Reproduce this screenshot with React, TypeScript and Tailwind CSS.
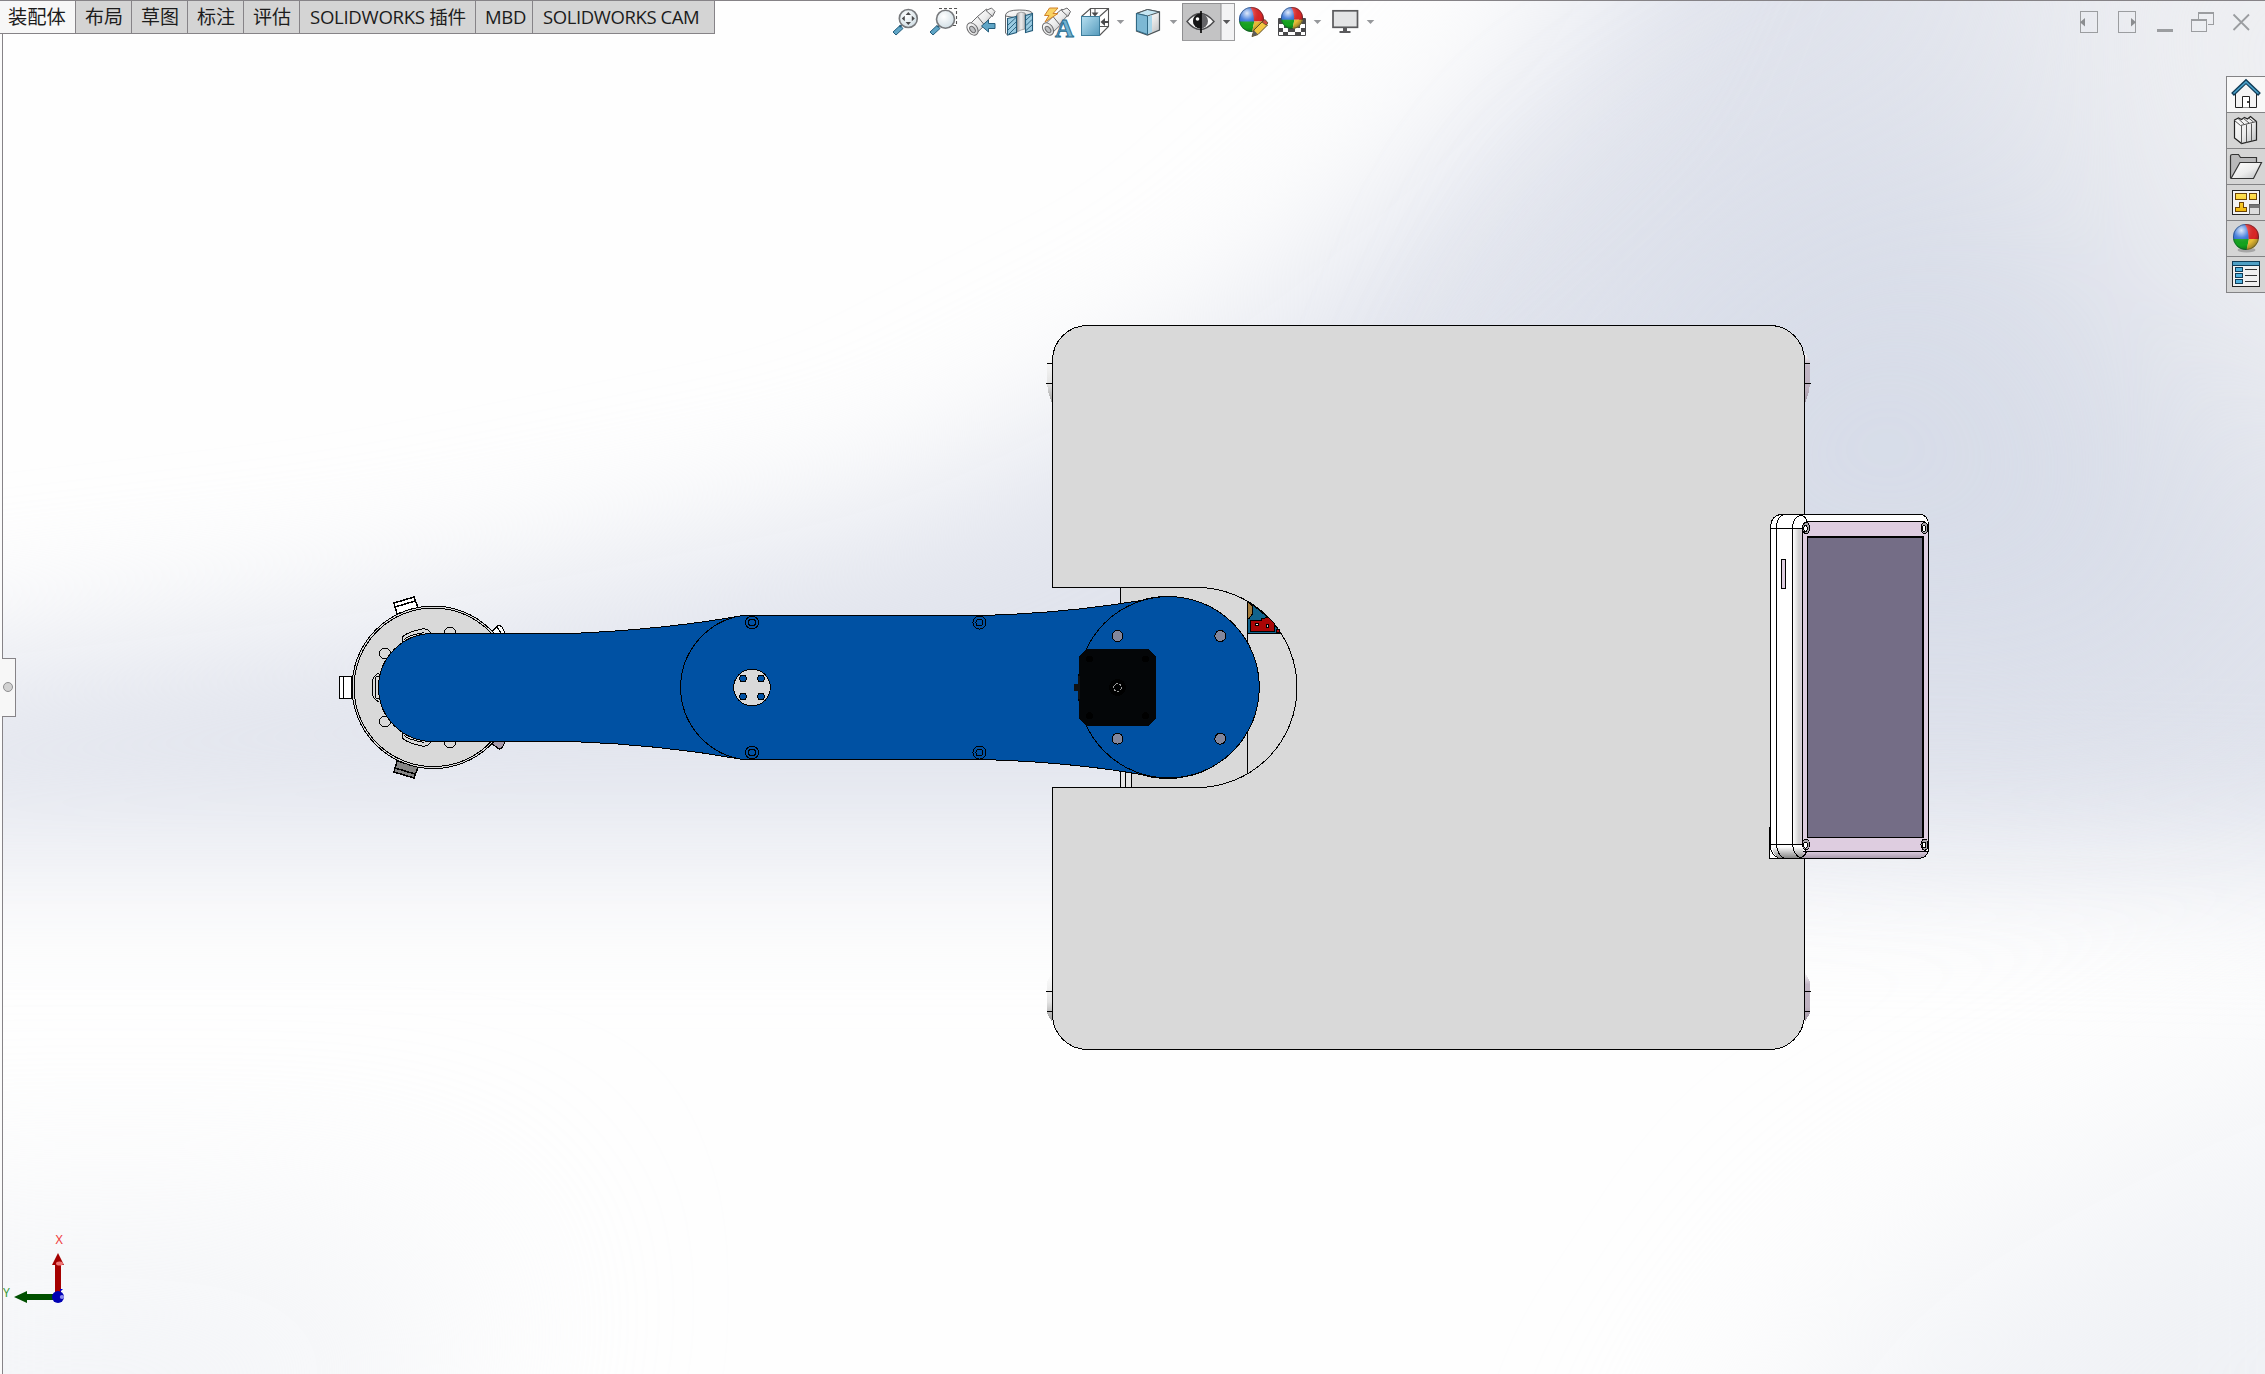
import type { ReactNode } from "react";

const INK = "#4a4a4c";

function Cell({ x, w, y = 0, h = 44, children }: { x: number; w: number; y?: number; h?: number; children: ReactNode }) {
  return (
    <svg className="block shrink-0" width={w} height={h} viewBox={`${x} ${y} ${w} ${h}`}>
      {children}
    </svg>
  );
}

function Caret({ x, w, cx }: { x: number; w: number; cx: number }) {
  return (
    <Cell x={x} w={w}>
      <path d={`M${cx - 3.8} 20h7.6l-3.8 4z`} fill="#96989b" />
    </Cell>
  );
}

function Ball({ cx, cy, r }: { cx: number; cy: number; r: number }) {
  return (
    <g>
      <clipPath id={`ball${cx}`}>
        <circle cx={cx} cy={cy} r={r} />
      </clipPath>
      <g clipPath={`url(#ball${cx})`}>
        <path d={`M${cx - r} ${cy - r}h${r}q${r * 0.3} ${r * 0.7} ${r * 0.2} ${r * 1.2}h${-r * 1.2}z`} fill="#2f6fd8" />
        <path d={`M${cx - 0.1 * r} ${cy - r}h${r * 1.2}v${r * 1.15}h${-r * 0.9}q0 -${r * 0.7} ${-r * 0.3} ${-r * 1.15}`} fill="#dc2626" />
        <path d={`M${cx - r} ${cy + r * 0.15}h${r * 1.22}l-${r * 0.2} ${r}h${-r}z`} fill="#14a51e" />
        <path d={`M${cx + r * 0.22} ${cy + r * 0.15}h${r}v${r}h${-r * 1.2}z`} fill="#e8bd35" />
        <circle cx={cx} cy={cy} r={r} fill="url(#gloss)" />
      </g>
      <circle cx={cx} cy={cy} r={r - 0.4} fill="none" stroke="#1b2f3c" strokeOpacity=".5" strokeWidth=".9" />
    </g>
  );
}

function Telescope({ dx }: { dx: number }) {
  return (
    <g transform={`translate(${dx} 0)`} stroke="#6a6a6c" strokeWidth="1" fill="url(#metal)">
      <path d="M968 26l10-10 7 9-10 9.500z" />
      <path d="M977.500 16.500l9-7.500 5.500 6.500-8 9z" />
      <path d="M986 10.500l5.500-2.500 3.500 3.500-2.500 5z" />
      <ellipse cx="972.500" cy="29" rx="4.800" ry="6.800" transform="rotate(-38 972.500 29)" />
      <ellipse cx="972.500" cy="29.500" rx="2.200" ry="3.600" transform="rotate(-38 972.500 29.500)" fill="#bfc1c4" />
    </g>
  );
}

function Defs() {
  return (
    <svg className="absolute" width="0" height="0">
      <defs>
        <radialGradient id="gloss" cx=".32" cy=".25" r=".8">
          <stop offset="0" stopColor="#fff" stopOpacity=".85" />
          <stop offset=".35" stopColor="#fff" stopOpacity=".15" />
          <stop offset=".7" stopColor="#000" stopOpacity="0" />
          <stop offset="1" stopColor="#000" stopOpacity=".35" />
        </radialGradient>
        <linearGradient id="metal" x1="0" y1="0" x2="1" y2="1">
          <stop offset="0" stopColor="#fff" />
          <stop offset=".55" stopColor="#ececec" />
          <stop offset="1" stopColor="#b9bbbd" />
        </linearGradient>
        <linearGradient id="blue" x1="0" y1="0" x2="1" y2="1">
          <stop offset="0" stopColor="#b7e0f1" />
          <stop offset="1" stopColor="#559abc" />
        </linearGradient>
        <linearGradient id="bore" x1="0" y1="0" x2="1" y2="0">
          <stop offset="0" stopColor="#9fa1a4" />
          <stop offset=".5" stopColor="#eeeeef" />
          <stop offset="1" stopColor="#b5b7ba" />
        </linearGradient>
        <linearGradient id="gold" x1="0" y1="0" x2="0" y2="1">
          <stop offset="0" stopColor="#ffe253" />
          <stop offset="1" stopColor="#efb60a" />
        </linearGradient>
        <radialGradient id="lens" cx=".4" cy=".35" r=".7">
          <stop offset="0" stopColor="#fff" />
          <stop offset="1" stopColor="#cfdde4" />
        </radialGradient>
      </defs>
    </svg>
  );
}

function Toolbar() {
  return (
    <div className="flex h-[44px]">
      <Cell x={890} w={34}>
        <path d="M900 25.500l3 3-7 6.500-3-3z" fill="#5fa5c6" stroke="#245d7c" />
        <path d="M899.500 27l3.500-3" stroke="#245d7c" strokeWidth="2" />
        <circle cx="908.300" cy="18.500" r="9" fill="url(#lens)" stroke="#77797c" strokeWidth="1.600" />
        <path d="M908.300 12l2.700 3h-5.400zM908.300 25l2.700-3h-5.400zM901.800 18.500l3-2.700v5.400zM914.800 18.500l-3-2.700v5.400z" fill="#4a4a4c" />
      </Cell>
      <Cell x={924} w={38}>
        <path d="M939 8.500h17.500V25.500h-4" fill="none" stroke="#555" strokeWidth="1.100" strokeDasharray="3 2" />
        <path d="M937 25.500l3 3-7 6.500-3-3z" fill="#5fa5c6" stroke="#245d7c" />
        <path d="M937.500 27l3-3" stroke="#245d7c" strokeWidth="2" />
        <circle cx="945.500" cy="19.300" r="9" fill="url(#lens)" stroke="#77797c" strokeWidth="1.600" />
      </Cell>
      <Cell x={962} w={38}>
        <Telescope dx={0} />
        <path d="M981.500 26l7-6v3.500h6.500v5h-6.500V32z" fill="#5fa5c6" stroke="#245d7c" />
      </Cell>
      <Cell x={1000} w={37}>
        <path d="M1005.500 15q1-5 14-5t13 4v1l-7 2v-3q-4-2-9 1v3l-11-2z" fill="url(#metal)" stroke="#6b6b6d" />
        <path d="M1017 13.500q4-2.500 8-.5v16q-4 .5-8 3z" fill="url(#bore)" stroke="#8c8c8e" strokeWidth=".7" />
        <path d="M1007.500 18.500l9-2v16l-9 2.500zM1025.500 15.500l7-2v17l-7 2z" fill="#9acbe2" stroke="#225a78" strokeWidth="1.100" />
        <path d="M1005.500 15v18l2 2" fill="none" stroke="#6b6b6d" />
        <path d="M1008 25l8-7.500M1008 30l8-8M1009 34l7-7M1026 20l6-5.500M1026 25.500l6-6M1026 30.500l6-5.500" stroke="#225a78" strokeWidth=".9" />
      </Cell>
      <Cell x={1037} w={39}>
        <Telescope dx={75.500} />
        <path d="M1049.500 8h8.500l-5 5.500h5L1045 22l4-6.500h-4.500z" fill="#f9d262" stroke="#d0802a" />
        <text x="1055" y="37" fontFamily="Liberation Serif" fontWeight="700" fontSize="26" textLength="18" fill="#6fb2d2" stroke="#24688b" strokeWidth=".9">A</text>
      </Cell>
      <Cell x={1076} w={36}>
        <path d="M1081.500 16.500l9-8h18v18l-9 9M1108.500 8.500l-9 8M1090.500 8.500v8M1100 26.500h8" fill="none" stroke="#555" strokeWidth="1.100" />
        <rect x="1081.500" y="16.500" width="18" height="19" fill="url(#blue)" stroke="#3c7c9b" />
        <path d="M1094.500 9v3.500h-3l3.500 4 3.500-4h-3V9zM1109 21h-4v-3l-4.500 4 4.500 4v-3h4z" fill={INK} />
      </Cell>
      <Caret x={1112} w={18} cx={1120.5} />
      <Cell x={1130} w={36}>
        <path d="M1136.500 13.500l11-4 12 2.500v18l-12 5-11-4z" fill="url(#metal)" stroke="#4c5559" strokeWidth="1.200" />
        <path d="M1136.500 13.500l11-4 12 2.500-12 4z" fill="#c5e6f3" stroke="#4c5559" />
        <path d="M1136.500 13.500l11 2.500v18.500l-11-4z" fill="#7cb8d4" stroke="#2f6985" />
        <path d="M1148 16.500l4-1.500v17l-4 2z" fill="#a8d6ea" />
      </Cell>
      <Caret x={1166} w={16} cx={1173.5} />
      <Cell x={1182} w={53}>
        <rect x="1182.500" y="3.500" width="52" height="37" fill="#f3f3f4" stroke="#9b9b9d" />
        <rect x="1183" y="4" width="38" height="36" fill="#c3c3c4" />
        <path d="M1221 4v36M1182.500 40V3.500H1221" fill="none" stroke="#8f8f91" />
        <path d="M1187 21.500q13-16 27 0q-14 16-27 0z" fill="#f7f7f7" stroke="#4a4a4c" strokeWidth="1.400" />
        <circle cx="1200.500" cy="21" r="7.500" fill="#636366" />
        <path d="M1200.500 13.500a7.500 7.500 0 0 0 0 15z" fill="#161617" />
        <circle cx="1197.500" cy="19" r="1.800" fill="#fff" />
        <path d="M1201 11v22" stroke="#000" strokeWidth="1.600" />
        <path d="M1222.800 20h7.600l-3.800 4z" fill="#58585a" />
      </Cell>
      <Cell x={1235} w={37}>
        <Ball cx={1251.500} cy={19.500} r={12.500} />
        <path d="M1252 36.500l2-6.500 9-9 4.500 4-9.500 9.500z" fill="#f3c740" stroke="#5e4a22" />
        <path d="M1252 36.500l2-6 3.800 3.800z" fill="#5b5b5d" />
        <path d="M1262 22l3-2.500 3 3.500-2 2z" fill="#d34b3f" stroke="#5e4a22" strokeWidth=".8" />
      </Cell>
      <Cell x={1272} w={38}>
        <path d="M1278.500 18.500h27v17h-27z" fill="#fff" stroke="#4a4a4c" />
        <path d="M1279 19h5v5h-5zM1299 19h6v5h-6zM1284 24h4v4h-4zM1295 24h5v4h-5zM1279 28h4v4h-4zM1288 28h7v4h-7zM1301 28h4v4h-4zM1283 32h5v3.500h-5zM1295 32h6v3.500h-6z" fill="#4a4a4c" />
        <Ball cx={1292} cy={18} r={11} />
      </Cell>
      <Caret x={1310} w={18} cx={1317.5} />
      <Cell x={1328} w={34}>
        <rect x="1333" y="10.800" width="24.500" height="16.500" fill="#e3e4e5" stroke="#5a5a5c" strokeWidth="1.700" />
        <path d="M1343 28h4v3h3.500v2h-11v-2h3.500z" fill="#5a5a5c" />
      </Cell>
      <Caret x={1362} w={18} cx={1370.5} />
    </div>
  );
}

function WindowControls() {
  return (
    <Cell x={2075} w={190}>
      <g fill="none" stroke="#9b9da0" shapeRendering="crispEdges">
        <path d="M2080.500 11.500h17v21h-17zM2118.500 11.500h17v21h-17z" />
        <path d="M2157 30.500h16" strokeWidth="3" />
        <path d="M2198.500 19v-6.500h15v12h-6" />
        <path d="M2198 13h16M2191 20h16" strokeWidth="2" />
        <path d="M2191.500 19.500h15v12h-15z" />
      </g>
      <path d="M2085 18v8.500l-5-4.200zM2131 18v8.500l5-4.200z" fill="#8b8d90" />
      <path d="M2233.500 14.500l15.500 15.500M2249 14.500l-15.500 15.500" stroke="#9b9da0" strokeWidth="1.800" />
    </Cell>
  );
}

const tabs = [
  { label: "装配体", box: "w-[76px] pl-[8px] bg-[#f7f7f7] text-[19.3px]" },
  { label: "布局", box: "w-[56px] pl-[9px] bg-[#d4d4d4] text-[19px]" },
  { label: "草图", box: "w-[56px] pl-[9px] bg-[#d4d4d4] text-[19px]" },
  { label: "标注", box: "w-[56px] pl-[9px] bg-[#d4d4d4] text-[19px]" },
  { label: "评估", box: "w-[56px] pl-[9px] bg-[#d4d4d4] text-[19px]" },
  { label: "SOLIDWORKS 插件", box: "w-[176px] pl-[10px] bg-[#d4d4d4] text-[18.6px] tracking-[-0.3px]" },
  { label: "MBD", box: "w-[57px] pl-[9px] bg-[#d4d4d4] text-[18.5px] tracking-[-0.35px]" },
  { label: "SOLIDWORKS CAM", box: "w-[182px] pl-[10px] bg-[#d4d4d4] text-[18.5px] tracking-[-0.4px]" },
];

function Tabs() {
  return (
    <nav className="flex h-[33px] font-['Open_Sans','Noto_Sans_CJK_SC',sans-serif] text-[#1c1c1c]">
      {tabs.map((t) => (
        <div
          key={t.label}
          className={`flex shrink-0 items-center whitespace-nowrap border-r border-b border-[#868387] leading-none ${t.box}`}
        >
          {t.label}
        </div>
      ))}
    </nav>
  );
}

function SideTab({ y, active, children }: { y: number; active?: boolean; children: ReactNode }) {
  return (
    <button className={`block h-[36px] w-[39px] border-b border-l border-[#838385] ${active ? "bg-[#f8f8f8]" : "bg-[#d5d5d5]"}`}>
      <Cell x={2227} w={38} y={y} h={35}>
        {children}
      </Cell>
    </button>
  );
}

function SidePanel() {
  return (
    <aside className="flex w-[39px] flex-col self-end border-t border-[#838385]">
      <SideTab y={77} active>
        <path d="M2235.500 93l10.500-10 10.500 10v14.500h-21z" fill="#f4f4f4" stroke="#222" />
        <path d="M2232.500 94.500L2246 81.500l13.500 13" fill="none" stroke="#0f3b56" strokeWidth="4" />
        <path d="M2233.500 93.500L2246 81.800l12.500 11.700" fill="none" stroke="#4aa0c8" strokeWidth="1.600" />
        <path d="M2242.500 107.500v-11h7v11" fill="#fff" stroke="#222" />
        <path d="M2247 101h2v2h-2z" fill="#444" />
      </SideTab>
      <SideTab y={113}>
        <path d="M2234.500 120l4-2 3 1.500 3-2 3 1.500 3-2.500 6 5v18.500l-15 3.500-7-5.500z" fill="url(#metal)" stroke="#222" strokeWidth="1.200" />
        <path d="M2234.500 120.500l6 5 16-4M2241.500 125.500v18M2246.500 124.500v18M2251.500 123.500v18M2238 118.500l6 5.500M2243 118l6 5M2248 117.500l5.500 4.500" fill="none" stroke="#555" />
      </SideTab>
      <SideTab y={149}>
        <path d="M2230.500 178v-22q0-1.500 2-1.500h6l2 3h16v5" fill="#b9b9ba" stroke="#333" strokeWidth="1.200" />
        <path d="M2231 178.500l9-16h21.500l-8 16z" fill="url(#metal)" stroke="#333" strokeWidth="1.200" />
      </SideTab>
      <SideTab y={185}>
        <g shapeRendering="crispEdges">
          <path d="M2232.500 190.500h27v24h-27z" fill="#f3f3f3" stroke="#222" />
          <path d="M2235.500 193.500h11v6h-11zM2249.500 193.500h7v6h-7zM2235.500 211.500v-4h4v-5h4v5h3v4z" fill="url(#gold)" stroke="#6d4404" />
          <path d="M2249.500 204.500h10v10h-10z" fill="#ddd" stroke="#666" />
          <path d="M2250 205h9v3h-9z" fill="#777" />
        </g>
      </SideTab>
      <SideTab y={221}>
        <ellipse cx="2246.500" cy="250" rx="9" ry="2.500" fill="#777" opacity=".5" />
        <Ball cx={2246} cy={237} r={13} />
      </SideTab>
      <SideTab y={257}>
        <g shapeRendering="crispEdges">
          <path d="M2232.500 261.500h27v25h-27z" fill="#f1f1f1" stroke="#222" />
          <path d="M2232.500 261.500h27v4h-27z" fill="#4fa0c5" stroke="#0f3b56" />
          <path d="M2235.500 267.500h7v4h-7zM2235.500 273.500h7v4h-7zM2235.500 279.500h7v4h-7z" fill="#4fb0dc" stroke="#0f3b56" />
          <path d="M2245 269.500h12M2245 275.500h12M2245 281.500h12" stroke="#333" />
        </g>
      </SideTab>
    </aside>
  );
}

function Backdrop() {
  return (
    <g>
      <rect width="2265" height="1374" fill="#fefefe" />
      <g filter="url(#soft)">
        <path d="M-300 690L400 610L900 510L1250 330L1560 60L1700 -300H2700V870L1800 850L-300 850z" fill="#e1e4ed" />
      </g>
      <g filter="url(#wide)">
        <path d="M1650 280L1950 100L2200 450L2250 700H1750L1500 600z" fill="#d7dce8" />
        <path d="M1960 -200H2700V620L2350 500L2080 180z" fill="#eeeff2" />
        <path d="M-200 1270H500L300 1500H-200zM1900 1300L2500 1000V1600H1700z" fill="#eff1f5" />
      </g>
    </g>
  );
}

function Screw({ x, y }: { x: number; y: number }) {
  return (
    <g fill="none">
      <circle cx={x} cy={y} r="6.500" />
      <circle cx={x} cy={y} r="3.500" />
    </g>
  );
}

function EndEffector() {
  return (
    <g>
      <path d="M339.500 676.500h12.500v22h-12.500zM343.500 676.500v22" fill="#fff" strokeWidth="1.500" />
      <path d="M394 603l20-6 4 11-21 6zM395 607l20-6" fill="#fff" strokeWidth="1.500" />
      <path d="M394 772l20 6 4-11-21-6zM395 768l20 6" fill="#858585" strokeWidth="1.500" />
      <path d="M491 632l8-7 3 2 4 8-14 5zM497 627l4 6" fill="#fff" strokeWidth="1.300" />
      <path d="M491 743l8 6 3-1 4-8-14-5z" fill="#a69bab" strokeWidth="1.300" />
      <circle cx="433.300" cy="687.300" r="81.300" fill="#d9d9d9" />
      <circle cx="433.300" cy="687.300" r="79.300" fill="none" />
      <circle cx="385" cy="653.500" r="5.500" fill="none" />
      <circle cx="385" cy="721.500" r="5.500" fill="none" />
      <circle cx="450" cy="632.500" r="5.500" fill="none" />
      <circle cx="450" cy="742.500" r="5.500" fill="none" />
      <path d="M402 645v-7q2-5 20-9 7-1 9 5M404.500 640q1-4 20-7.500M402 730v7q2 5 20 9 7 1 9-5M404.500 735q1 4 20 7.500M379 673q-6 3-6.500 8v13q.5 5 6.500 8M375 677v21M378.500 676h-3M378.500 698h-3" fill="none" />
    </g>
  );
}

function Foot({ x, flip, bottom }: { x: number; flip?: boolean; bottom?: boolean }) {
  const tone = flip ? "url(#footPink)" : "url(#footGray)";
  return (
    <g transform={`translate(${x} 0) scale(${flip ? -1 : 1} 1)`}>
      <path
        d={bottom ? "M5 972L0 982v31l5 9z" : "M5 353L0 361v22l1 8 4 13z"}
        fill={tone}
        stroke="none"
      />
      <path d={bottom ? "M-1 991.500h7M0 1011.500h6" : "M0 363.500h6M-1 383.500h7"} />
    </g>
  );
}

function Model() {
  return (
    <svg className="absolute inset-0 block" width="2265" height="1374" viewBox="0 0 2265 1374">
      <defs>
        <filter id="soft" filterUnits="userSpaceOnUse" x="-600" y="-600" width="3500" height="2600" colorInterpolationFilters="sRGB">
          <feGaussianBlur stdDeviation="95 75" />
        </filter>
        <filter id="wide" filterUnits="userSpaceOnUse" x="-600" y="-600" width="3500" height="2600" colorInterpolationFilters="sRGB">
          <feGaussianBlur stdDeviation="120" />
        </filter>
        <linearGradient id="footPink" x1="0" y1="0" x2="0" y2="1">
          <stop offset="0" stopColor="#fff" />
          <stop offset=".25" stopColor="#c0b4c3" />
          <stop offset=".7" stopColor="#bdb0bf" />
          <stop offset="1" stopColor="#9d939f" />
        </linearGradient>
        <linearGradient id="footGray" x1="0" y1="0" x2="0" y2="1">
          <stop offset="0" stopColor="#fff" />
          <stop offset=".6" stopColor="#e3e3e3" />
          <stop offset="1" stopColor="#999" />
        </linearGradient>
        <linearGradient id="shellEdge" x1="0" y1="0" x2="1" y2="0">
          <stop offset="0" stopColor="#fff" />
          <stop offset=".6" stopColor="#cfcfcf" />
          <stop offset="1" stopColor="#dfd0e0" />
        </linearGradient>
        <linearGradient id="shellBottom" x1="0" y1="0" x2="0" y2="1">
          <stop offset="0" stopColor="#ddcde0" />
          <stop offset="1" stopColor="#a99cac" />
        </linearGradient>
        <linearGradient id="shellBottomGray" x1="0" y1="0" x2="0" y2="1">
          <stop offset="0" stopColor="#fff" />
          <stop offset="1" stopColor="#858585" />
        </linearGradient>
      </defs>
      <Backdrop />

      <g stroke="#000" strokeWidth="1" shapeRendering="crispEdges">
        <Foot x={1047} />
        <Foot x={1047} bottom />
        <Foot x={1810} flip />
        <Foot x={1810} flip bottom />

        <path d="M1120.500 587h76a100 100 0 0 1 0 201h-76z" fill="#d9d9d9" />
        <path d="M1120.500 765h11v22h-11zM1125.500 765v22" fill="#e6e6e6" />
        <path
          d="M1052.500 587.500V360.500a35 35 0 0 1 35-35h682a35 35 0 0 1 35 35v654a35 35 0 0 1-35 35h-682a35 35 0 0 1-35-35V787.500H1197a100 100 0 0 0 0-200z"
          fill="#d9d9d9"
        />
        <path d="M1247.500 601.500V773.500" />

        <path d="M1247.500 601.500q19 12 33.500 31.500h-33.500z" fill="#11638c" />
        <path d="M1247.500 602l5 4v8l-3 4h-2z" fill="#a37b3b" />
        <path d="M1250.500 620.500h11v-2l7-1 6 6v8h-24z" fill="#a90606" />
        <path d="M1255 623.500h3v2h-3z" fill="#fff" />
        <path d="M1266.500 624.500h2v3h-2z" fill="#ccc" />
        <path d="M1276 629h3v3h-3z" fill="#a90606" />

        <EndEffector />

        <path
          d="M432.500 633.500H571C630 631 690 625 743 615.500H980C1040 614 1090 609 1141 600.500A91 91 0 1 1 1141 774.500C1090 765.500 1040 761 980 759.500H743C690 750 630 743.500 571 741.500H432.500A54 54 0 0 1 432.500 633.500z"
          fill="#0051a3"
        />
        <circle cx="1168.600" cy="687.300" r="90.700" fill="#0051a3" />
        <path d="M743 615.500A72.750 72.750 0 0 0 743 759.500" fill="none" />
        <Screw x={752} y={622.500} />
        <Screw x={979.500} y={622.500} />
        <Screw x={752} y={752.500} />
        <Screw x={979.500} y={752.500} />
        <circle cx="752" cy="687.500" r="18.300" fill="#d9d9d9" />
        {[[743, 678.5], [761, 678.5], [743, 696.5], [761, 696.5]].map(([x, y]) => (
          <circle key={`${x}-${y}`} cx={x} cy={y} r="3.300" fill="#0051a3" />
        ))}

        <path d="M1086.500 649.500h62l7 7v62l-7 7h-62l-7-7v-62z" fill="#040608" stroke="#040608" />
        <path d="M1074 684h4v-8h2v23h-2v-8h-4z" fill="#101214" stroke="none" />
        {[[1089.5, 659], [1145.5, 659], [1089.5, 715.5], [1145.5, 715.5]].map(([x, y]) => (
          <circle key={`${x}-${y}`} cx={x} cy={y} r="3" fill="#000" />
        ))}
        <circle cx="1117.500" cy="687.500" r="8" fill="#000" />
        <circle cx="1117.500" cy="687.500" r="4" fill="none" stroke="#9a9a9a" strokeDasharray="3 1" />
        {[[1117.5, 636], [1220.3, 636], [1117.5, 738.7], [1220.3, 738.7]].map(([x, y]) => (
          <circle key={`${x}-${y}`} cx={x} cy={y} r="5.500" fill="#82869b" />
        ))}

        <path d="M1769.500 827v31.500h12" fill="#fff" />
        <path d="M1780 514.500h141q7 1 7.500 10v324q-1 8-7.500 9.500h-141q-9-2-9.500-11V526q1-10 9.500-11.500z" fill="#fff" />
        <path d="M1793 528h10v317h-10z" fill="url(#shellEdge)" stroke="none" />
        <path d="M1803 851.500h125q-2 6-7 6.500h-119z" fill="url(#shellBottom)" />
        <path d="M1772 847h31v11h-24q-6-4-7-11z" fill="url(#shellBottomGray)" stroke="none" />
        <path d="M1806.500 521.500h118l4 5v320l-4 5h-118l-4-5v-320z" fill="#decde0" />
        <path d="M1807.500 537h116v300.500h-116z" fill="#746d86" />
        <path d="M1807 537h117M1923 537v301" strokeWidth="2" />
        <path
          d="M1770.500 528.500h32M1770.500 844.500h32M1776.500 848V526q1-9 6-11M1792.500 844V526q1-9 9-11q5 2 5 7M1776.500 844q1 11 7 14M1792.500 844q1 11 8 14q5-2 6-7"
          fill="none"
        />
        <path d="M1781.500 559.500h4v29h-4z" fill="#decde0" />
        {[[1806, 528], [1924.5, 528], [1806, 844.5], [1924.5, 844.5]].map(([x, y]) => (
          <g key={`${x}-${y}`}>
            <ellipse cx={x} cy={y} rx="3.500" ry="5.500" fill="#a7a3aa" />
            <ellipse cx={x - 0.5} cy={y + 0.5} rx="1.800" ry="3" fill="#fff" />
          </g>
        ))}
      </g>

      <g stroke="none">
        <path d="M55 1264h6v30h-6z" fill="#a50000" />
        <path d="M58 1253l6 12h-12z" fill="#a50000" />
        <ellipse cx="59.500" cy="1263.500" rx="3.500" ry="2" fill="#f07878" />
        <path d="M26 1294h28v6h-28zM14 1297l13-6v12z" fill="#005000" />
        <circle cx="58" cy="1297" r="6" fill="#0000b4" />
        <path d="M60 1289h3l-3 3z" fill="#0000d0" />
        <ellipse cx="62" cy="1297" rx="2.200" ry="2" fill="#8c8cf0" />
        <text x="55.500" y="1243.500" fontFamily="Noto Sans, sans-serif" fontSize="12.500" fill="#f03c3c">X</text>
        <text x="3" y="1296.500" fontFamily="Noto Sans, sans-serif" fontSize="12" fill="#359a35">Y</text>
      </g>

      <g shapeRendering="crispEdges">
        <path d="M0 34h2v1340h-2z" fill="#fbfbfb" />
        <path d="M2.500 34v1340" stroke="#868387" />
        <path d="M0 658.500h15.500v58H0z" fill="#f7f7f7" />
        <path d="M2 658.500h13.500v58H2" fill="none" stroke="#868387" />
      </g>
      <circle cx="8" cy="687" r="4.500" fill="#d2d2d2" stroke="#8f8f91" />
    </svg>
  );
}

export default function App() {
  return (
    <main className="relative h-[1374px] w-[2265px] overflow-hidden bg-white">
      <Defs />
      <Model />
      <div className="relative flex h-full flex-col">
        <header className="flex h-[76px] items-start justify-between border-t border-[#868387]">
          <div className="flex items-start gap-[175px]">
            <Tabs />
            <div className="-mt-px">
              <Toolbar />
            </div>
          </div>
          <div className="-mt-px">
            <WindowControls />
          </div>
        </header>
        <SidePanel />
      </div>
    </main>
  );
}
